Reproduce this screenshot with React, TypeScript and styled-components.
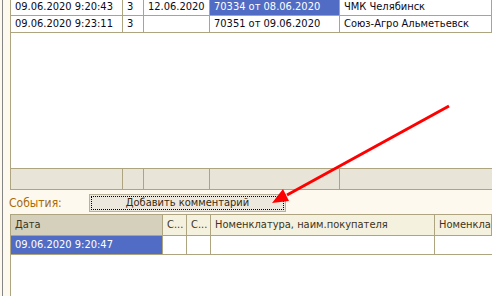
import styled, { createGlobalStyle } from 'styled-components';

const GlobalStyle = createGlobalStyle`
  body {
    margin: 0;
    background: #fdf9ee;
    font-family: 'DejaVu Sans Condensed', 'DejaVu Sans', 'Liberation Sans', sans-serif;
    font-stretch: condensed;
  }
`;

const LINE = '#aea47f';

const Page = styled.div`
  position: relative;
  width: 492px;
  height: 296px;
  overflow: hidden;
  display: flex;
  background: #fdf9ee;
  padding-left: 2px;
  box-sizing: border-box;
`;

const Edge = styled.div`
  width: 7px;
  flex: none;
  border-left: 1px solid #858585;
`;

const Main = styled.div`
  flex: 1;
  display: flex;
  flex-direction: column;
  min-width: 0;
`;

const TopGrid = styled.div`
  height: 168px;
  flex: none;
  background: #fff;
  border-left: 1px solid ${LINE};
  overflow: hidden;
`;

const Rows = styled.div`
  margin-top: -1px;
`;

const Row = styled.div<{ $cols: string; $h: number }>`
  display: grid;
  grid-template-columns: ${(p) => p.$cols};
  height: ${(p) => p.$h}px;
  border-bottom: 1px solid ${LINE};
`;

const Cell = styled.div<{ $sel?: boolean }>`
  border-right: 1px solid ${LINE};
  padding-left: 4px;
  font-size: 11px;
  line-height: 16px;
  white-space: nowrap;
  overflow: hidden;
  color: ${(p) => (p.$sel ? '#fff' : '#0a0a20')};
  background: ${(p) => (p.$sel ? '#506cc4' : 'transparent')};
`;

const Footer = styled.div<{ $cols: string }>`
  height: 20px;
  flex: none;
  display: grid;
  grid-template-columns: ${(p) => p.$cols};
  background: #e9e4d8;
  border: 1px solid ${LINE};
  border-right: none;
`;

const FooterCell = styled.div`
  border-right: 1px solid ${LINE};
`;

const EventsBar = styled.div`
  height: 24px;
  flex: none;
  display: flex;
  align-items: center;
  margin-left: -1px;
`;

const Label = styled.div`
  width: 80px;
  font-size: 12px;
  color: #a86a08;
  padding-top: 1px;
`;

const Button = styled.div`
  width: 197px;
  height: 18px;
  box-sizing: border-box;
  border: 1px solid #b9b29a;
  background: #ece8dd;
  padding: 1px;
  margin-top: 1px;
`;

const ButtonFace = styled.div`
  height: 100%;
  box-sizing: border-box;
  border: 1px dotted #000;
  display: flex;
  align-items: center;
  justify-content: center;
  font-size: 11px;
  color: #3b2a10;
`;

const BottomGrid = styled.div`
  flex: 1;
  background: #fff;
  border-top: 1px solid ${LINE};
  border-left: 1px solid ${LINE};
`;

const HeadCell = styled.div<{ $sorted?: boolean }>`
  border-right: 1px solid ${LINE};
  padding-left: 4px;
  font-size: 11px;
  line-height: 20px;
  white-space: nowrap;
  overflow: hidden;
  color: #3d3420;
  background: ${(p) => (p.$sorted ? '#d4d0bc' : '#f5f1df')};
`;

const DataCell = styled(Cell)`
  line-height: 18px;
`;

const Arrow = styled.svg`
  position: absolute;
  left: 0;
  top: 0;
  pointer-events: none;
`;

const topCols = '112px 21px 66px 130px 1fr';
const bottomCols = '152px 24px 24px 224px 1fr';

const topRows = [
  ['09.06.2020 9:20:43', '3', '12.06.2020', '70334 от 08.06.2020', 'ЧМК Челябинск'],
  ['09.06.2020 9:23:11', '3', '', '70351 от 09.06.2020', 'Союз-Агро Альметьевск'],
];

export default function App() {
  return (
    <>
      <GlobalStyle />
      <Page>
        <Edge />
        <Main>
          <TopGrid>
            <Rows>
              {topRows.map((r, i) => (
                <Row key={i} $cols={topCols} $h={16}>
                  {r.map((v, j) => (
                    <Cell key={j} $sel={i === 0 && j === 3}>
                      {v}
                    </Cell>
                  ))}
                </Row>
              ))}
            </Rows>
          </TopGrid>
          <Footer $cols={topCols}>
            <FooterCell />
            <FooterCell />
            <FooterCell />
            <FooterCell />
            <div />
          </Footer>
          <EventsBar>
            <Label>События:</Label>
            <Button>
              <ButtonFace>Добавить комментарий</ButtonFace>
            </Button>
          </EventsBar>
          <BottomGrid>
            <Row $cols={bottomCols} $h={20}>
              <HeadCell $sorted>Дата</HeadCell>
              <HeadCell>С...</HeadCell>
              <HeadCell>С...</HeadCell>
              <HeadCell>Номенклатура, наим.покупателя</HeadCell>
              <HeadCell>Номенклат</HeadCell>
            </Row>
            <Row $cols={bottomCols} $h={18}>
              <DataCell $sel>09.06.2020 9:20:47</DataCell>
              <DataCell />
              <DataCell />
              <DataCell />
              <div />
            </Row>
          </BottomGrid>
        </Main>
        <Arrow width="492" height="296" viewBox="0 0 492 296">
          <line x1="449" y1="106" x2="287" y2="195" stroke="#ff0000" strokeWidth="3" />
          <polygon points="272,203 289,201 283,189" fill="#ff0000" />
        </Arrow>
      </Page>
    </>
  );
}
